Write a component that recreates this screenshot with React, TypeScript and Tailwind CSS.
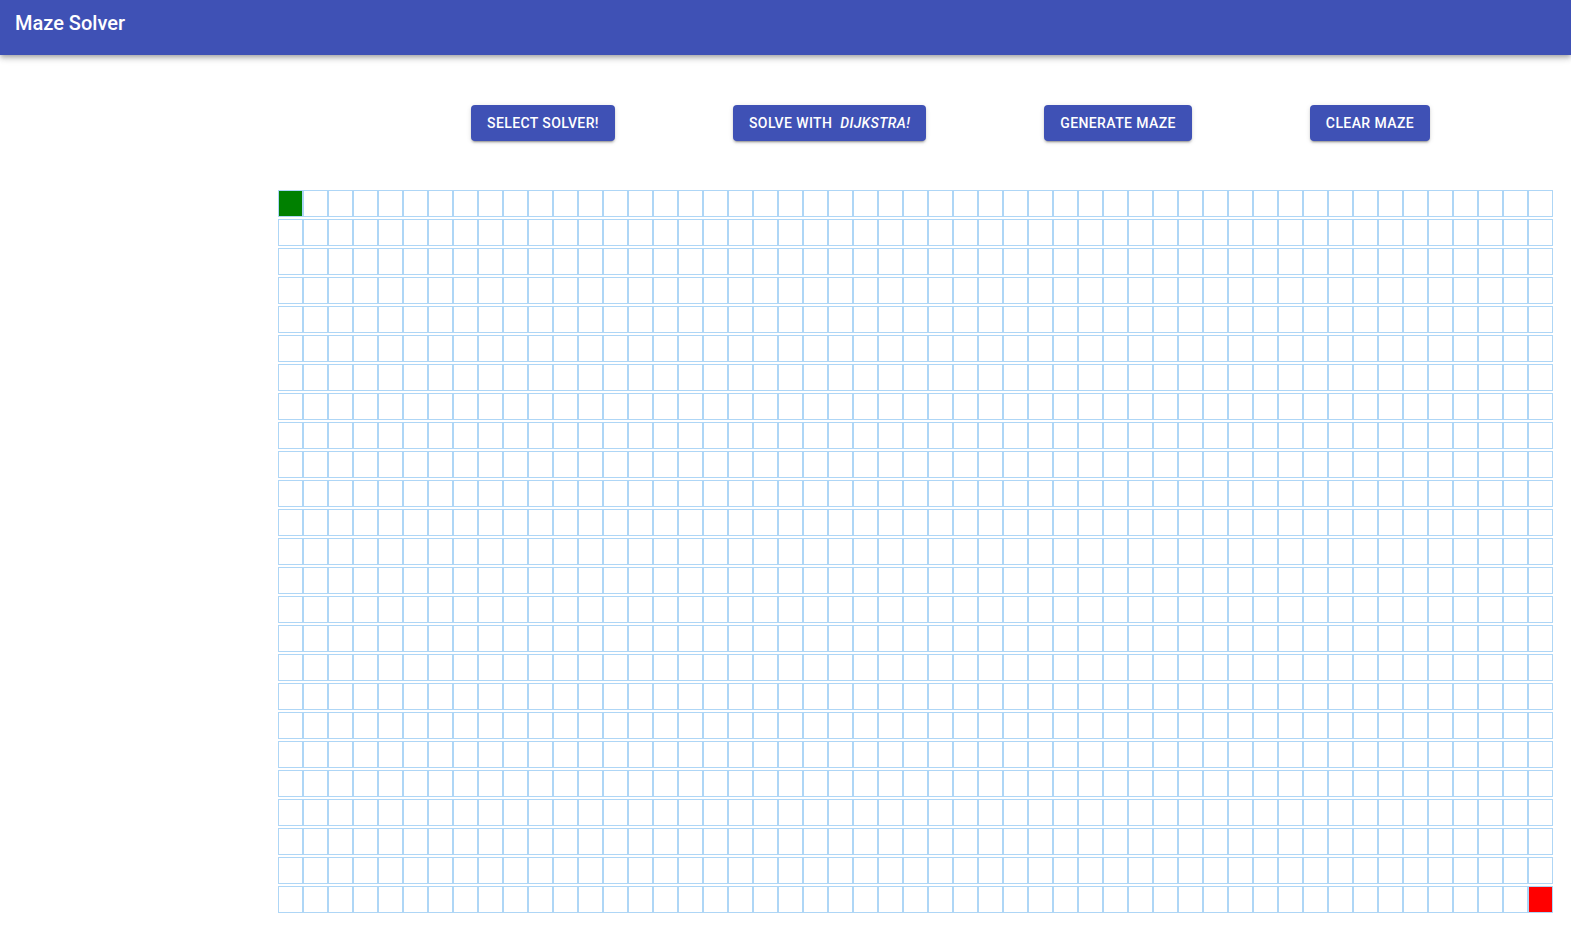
const ROWS = 25;
const COLS = 51;

function Cell({ row, col }: { row: number; col: number }) {
  let bg = "bg-white";
  if (row === 0 && col === 0) bg = "bg-[#008000]";
  if (row === ROWS - 1 && col === COLS - 1) bg = "bg-[#ff0000]";
  return <div className={`w-[25px] h-[27px] border border-[#aed6f6] ${bg}`} />;
}

function MazeButton({ children }: { children: React.ReactNode }) {
  return (
    <button className="h-9 px-4 rounded bg-[#3f51b5] text-white text-sm font-medium uppercase tracking-[0.4px] shadow-[0px_3px_1px_-2px_rgba(0,0,0,0.2),0px_2px_2px_0px_rgba(0,0,0,0.14),0px_1px_5px_0px_rgba(0,0,0,0.12)]">
      {children}
    </button>
  );
}

export default function App() {
  const rows = Array.from({ length: ROWS }, (_, r) => r);
  const cols = Array.from({ length: COLS }, (_, c) => c);

  return (
    <div className="min-h-screen bg-white font-['Roboto',sans-serif]">
      <header className="h-[55px] bg-[#3f51b5] px-[15px] pt-[7px] shadow-[0px_2px_4px_-1px_rgba(0,0,0,0.2),0px_4px_5px_0px_rgba(0,0,0,0.14),0px_1px_10px_0px_rgba(0,0,0,0.12)]">
        <h1 className="text-white text-xl font-medium leading-8">Maze Solver</h1>
      </header>

      <section className="flex gap-[118px] pl-[471px] pt-[50px]">
        <MazeButton>Select Solver!</MazeButton>
        <MazeButton>
          Solve with&nbsp; <i>Dijkstra!</i>
        </MazeButton>
        <MazeButton>Generate Maze</MazeButton>
        <MazeButton>Clear Maze</MazeButton>
      </section>

      <section className="flex flex-col gap-[2px] pl-[278px] pt-[49px]">
        {rows.map((r) => (
          <div key={r} className="flex">
            {cols.map((c) => (
              <Cell key={c} row={r} col={c} />
            ))}
          </div>
        ))}
      </section>
    </div>
  );
}
